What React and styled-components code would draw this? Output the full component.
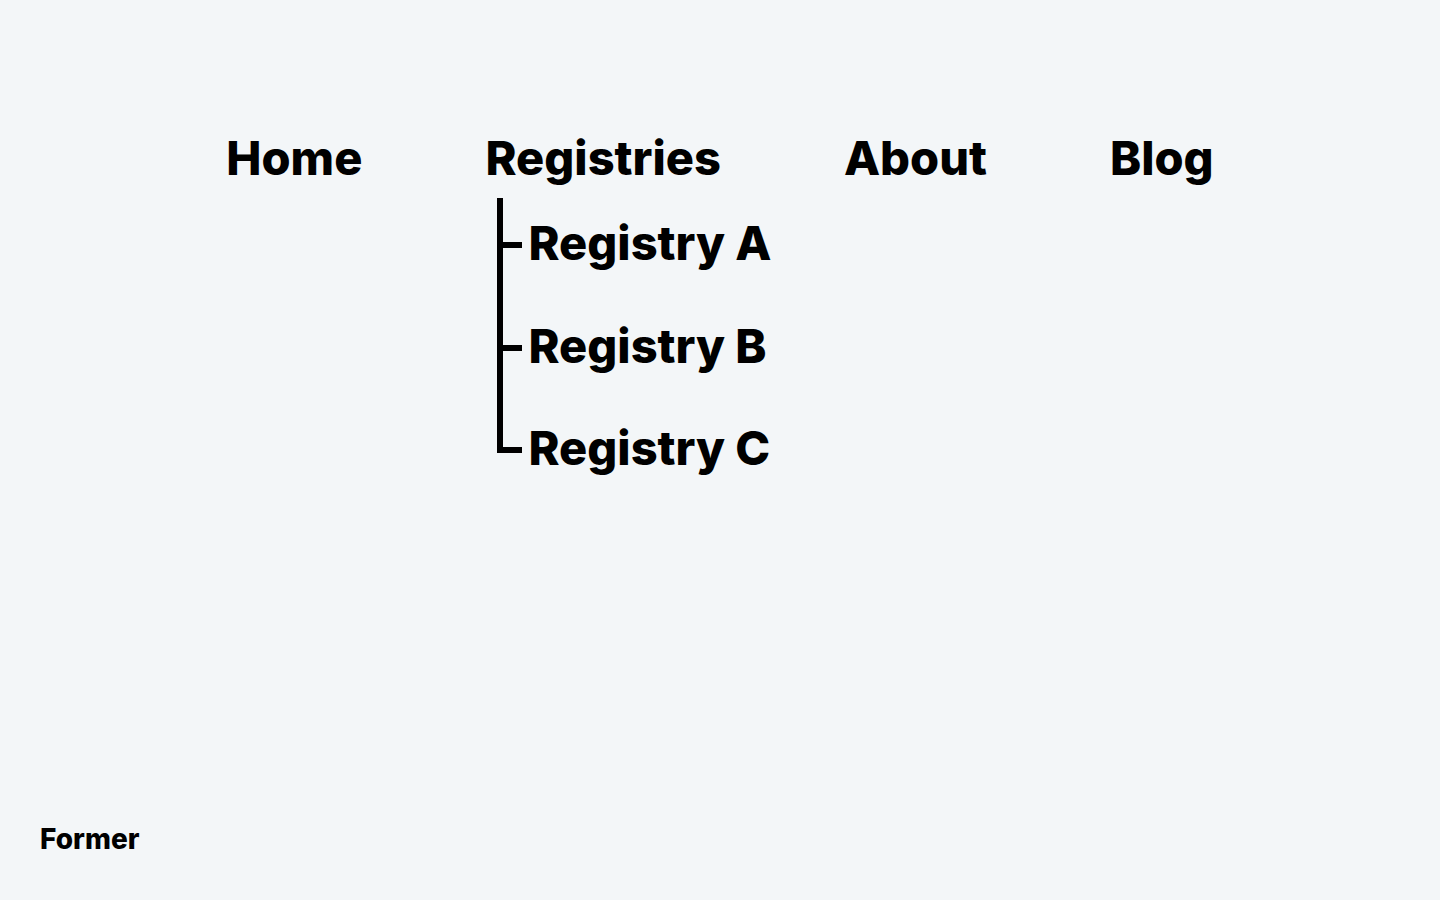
import React from "react";
import styled, { createGlobalStyle } from "styled-components";

const Global = createGlobalStyle`
  html, body { margin: 0; padding: 0; }
  body {
    background: #f3f6f8;
    font-family: "Inter", "Noto Sans", sans-serif;
    color: #000;
  }
`;

const Page = styled.div`
  min-height: 900px;
  display: flex;
  flex-direction: column;
  box-sizing: border-box;
  padding-top: 128px;
`;

const Nav = styled.nav`
  display: flex;
  justify-content: center;
  align-items: flex-start;
  gap: 123px;
`;

const NavItem = styled.div`
  position: relative;
  display: flex;
  flex-direction: column;
`;

const NavLink = styled.a`
  font-size: 47px;
  font-weight: 800;
  line-height: 60px;
  color: #000;
  text-decoration: none;
  white-space: nowrap;
`;

const Submenu = styled.ul`
  position: absolute;
  top: 100%;
  left: 12px;
  list-style: none;
  margin: 10px 0 0 0;
  padding: 0;
  display: flex;
  flex-direction: column;
`;

const SubItem = styled.li`
  position: relative;
  height: 102.5px;
  padding-left: 31px;
  box-sizing: border-box;
  &::before {
    content: "";
    position: absolute;
    left: 0;
    top: 0;
    width: 6px;
    height: ${(p) => (p.$last ? "50px" : "100%")};
    background: #000;
  }
  &::after {
    content: "";
    position: absolute;
    left: 0;
    top: 44px;
    width: 25px;
    height: 6px;
    background: #000;
  }
`;

const SubLink = styled.a`
  display: block;
  font-size: 47px;
  font-weight: 800;
  line-height: 90px;
  color: #000;
  text-decoration: none;
  white-space: nowrap;
`;

const Footer = styled.footer`
  margin-top: auto;
  padding: 0 0 44px 40px;
  font-size: 28px;
  font-weight: 800;
`;

export default function App() {
  const subs = ["Registry A", "Registry B", "Registry C"];
  return (
    <>
      <Global />
      <Page>
        <Nav>
          <NavItem>
            <NavLink href="#">Home</NavLink>
          </NavItem>
          <NavItem>
            <NavLink href="#">Registries</NavLink>
            <Submenu>
              {subs.map((s, i) => (
                <SubItem key={s} $last={i === subs.length - 1}>
                  <SubLink href="#">{s}</SubLink>
                </SubItem>
              ))}
            </Submenu>
          </NavItem>
          <NavItem>
            <NavLink href="#">About</NavLink>
          </NavItem>
          <NavItem>
            <NavLink href="#">Blog</NavLink>
          </NavItem>
        </Nav>
        <Footer>Former</Footer>
      </Page>
    </>
  );
}
